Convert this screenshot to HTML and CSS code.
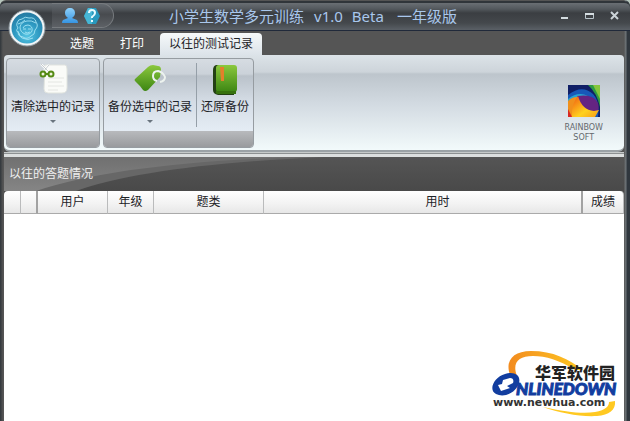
FILE: index.html
```html
<!DOCTYPE html>
<html lang="zh-CN">
<head>
<meta charset="utf-8">
<title>小学生数学多元训练</title>
<link rel="stylesheet" href="styles.css">
</head>
<body>
<div class="window">
  <header class="titlebar">
    <button class="orb" aria-label="菜单">
      <svg viewBox="0 0 38 38" width="38" height="38">
        <defs><radialGradient id="orb" cx=".5" cy=".75" r=".7"><stop offset="0" stop-color="#55c4e2"/><stop offset=".6" stop-color="#2d98c1"/><stop offset="1" stop-color="#257da5"/></radialGradient></defs>
        <circle cx="19" cy="19" r="18" fill="#f1f5f7" stroke="#8b969d"/>
        <circle cx="19" cy="19" r="15.500" fill="url(#orb)"/>
        <g fill="none" stroke="#a5e4f4" stroke-width=".9">
          <path d="M9 14q1-4 5-4 3-3 7-1 6-1 7 4 3 4-1 8 0 5-4 6-4 4-8 1-4 0-4-4-4-2-1-5-2-3-1-5z"/>
          <path d="M28 14q-5-3-9-2-6 1-7 6 0 5 5 7 5 1 7-3 1-5-4-6-4 0-5 3M15 20h3M20 20h3M17 23q2 2 5 0M10 22q-1 4 4 7 6 3 11 0M10 15q4-1 7-4"/>
        </g>
      </svg>
    </button>
    <div class="quick">
      <button aria-label="用户">
        <svg viewBox="0 0 18 16" width="18" height="16"><defs><linearGradient id="usr" x2="0" y2="1"><stop stop-color="#8ed0fa"/><stop offset="1" stop-color="#3694e2"/></linearGradient></defs><path d="M9 0c3 0 5 2 5 5s-2 4-3 5l5 2q1 1 1 3H1q0-2 1-3l5-2C6 9 4 8 4 5s2-5 5-5z" fill="url(#usr)"/></svg>
      </button>
      <button aria-label="帮助">
        <svg viewBox="0 0 18 16" width="18" height="16"><path d="M5 0h8l4 8-4 8H5L1 8z" fill="#2898bd"/><path d="M5 0h4v16H5L1 8z" fill="#46b6d5"/><path d="M6 5q0-3 3-3t3 3q0 2-3 4v1M9 12v2" fill="none" stroke="#e7fbff" stroke-width="2"/></svg>
      </button>
    </div>
    <h1 class="title"><span>小学生数学多元训练</span><span class="version">v1.0</span><span class="beta">Beta</span><span>一年级版</span></h1>
    <div class="controls">
      <button aria-label="最小化"><svg viewBox="0 0 11 11" width="11" height="11"><path d="M2 7h7" stroke="#d4dce0" stroke-width="2"/></svg></button>
      <button aria-label="最大化"><svg viewBox="0 0 11 11" width="11" height="11"><path d="M1.500 2.500h8v5h-8z" fill="none" stroke="#b9c4ca"/><path d="M1 3h9" stroke="#d4dce0" stroke-width="2"/></svg></button>
      <button aria-label="关闭"><svg viewBox="0 0 11 11" width="11" height="11"><path d="M2 1l7 7M9 1L2 8" stroke="#cbd3d8" stroke-width="2"/></svg></button>
    </div>
  </header>

  <nav class="tabs">
    <button>选题</button>
    <button>打印</button>
    <button class="active">以往的测试记录</button>
  </nav>

  <section class="ribbon">
    <div class="group">
      <div class="tools">
        <button class="tool">
          <svg viewBox="0 0 32 32" width="32" height="32"><path d="M8 1h20q2 0 2 4v19q0 5-5 5H11q-4 0-4-4z" fill="#fafbf8" stroke="#e1e4df"/><path d="M11 14h16M11 18h14M11 22h16M11 26h10" stroke="#e4e6e2"/><path d="M4 0l8 8M12 1L6 8" stroke="#fff" stroke-width="2"/><path d="M4 0l8 8M12 1L6 8" stroke="#aeb6b7" stroke-width=".7"/><g fill="#f1f4df" stroke="#558b15" stroke-width="2"><circle cx="6" cy="10" r="2.500"/><circle cx="14" cy="10" r="2.500"/></g><path d="M8 10h3" stroke="#558b15" stroke-width="2"/></svg>
          <span>清除选中的记录</span><i class="arrow"></i>
        </button>
      </div>
      <div class="group-foot"></div>
    </div>
    <div class="group">
      <div class="tools">
        <button class="tool">
          <svg viewBox="0 0 32 32" width="32" height="32"><defs><linearGradient id="tag" x2="0" y2="1"><stop stop-color="#8bc83d"/><stop offset="1" stop-color="#3d8613"/></linearGradient></defs><path d="M1 15L14 3q2-2 5-2l5 1q3 0 3 4l-1 7-12 13q-3 2-5 0l-3-4-5-5q-1-1 0-2z" fill="url(#tag)"/><path d="M23 17q-4-1-4-5 0-5 5-5 5 1 7 6 0 4-5 5" fill="none" stroke="#edf3ef" stroke-width="2"/></svg>
          <span>备份选中的记录</span><i class="arrow"></i>
        </button>
        <span class="divider"></span>
        <button class="tool">
          <svg viewBox="0 0 32 32" width="32" height="32"><path d="M8 1h-1Q4 2 4 6v20q0 4 5 5h16V1z" fill="#234014"/><rect x="7" y="1" width="21" height="27" rx="3" fill="url(#tag)"/><path d="M7 27h20v3H9q-3 0-2-3" fill="#36710e"/><path d="M11 3h4v14h-3z" fill="#e3802b"/></svg>
          <span>还原备份</span>
        </button>
      </div>
      <div class="group-foot"></div>
    </div>
    <div class="brand">
      <svg viewBox="0 0 32 32" width="32" height="32">
        <defs><clipPath id="square"><path d="M0 0h32v32H0z"/></clipPath><linearGradient id="flame" x2="1" y2="1"><stop offset=".1" stop-color="#f36b13"/><stop offset=".6" stop-color="#ffd21e"/><stop offset="1" stop-color="#f79a19"/></linearGradient></defs>
        <g clip-path="url(#square)"><path d="M0 0h32v32H0z" fill="#101f66"/><path d="M20 0h12v22Q29 8 20 0" fill="#2d9b43"/><path d="M25 0h7v14z" fill="#86c63c"/><path d="M0 10Q14-1 25 9q7 7 5 23h-3Q26 10 10 10 4 10 0 17z" fill="#1758b8"/><path d="M0 14Q10 6 20 11L8 17 0 22z" fill="#28a5d2"/><path d="M0 16q4-4 9-4l-4 20H0z" fill="#f0901c"/><path d="M9 11q14-2 19 4 4 5 2 11-14 3-21-15" fill="#642482"/><path d="M10 11q4 14 16 15l5-1-4 7H4Q3 19 10 11" fill="url(#flame)"/><path d="M0 24l4 8H0" fill="#d82923"/></g>
      </svg>
      <span>RAINBOW</span><span>SOFT</span>
    </div>
  </section>

  <main class="records">
    <div class="banner">
      <svg class="swoosh" viewBox="0 0 320 34" width="320" height="34"><defs><linearGradient id="shine" x2="0" y2="1"><stop stop-color="#707070"/><stop offset="1" stop-color="#858585"/></linearGradient></defs><path d="M0 0h320Q145 8 72 34H0z" fill="#676767"/><path d="M0 0h300Q120 5 32 34H0z" fill="url(#shine)"/></svg>
      <h2>以往的答题情况</h2>
    </div>
    <table>
      <colgroup><col class="mark"><col class="mark"><col class="user"><col class="grade"><col class="kind"><col><col class="score"></colgroup>
      <thead><tr><th></th><th class="thick"></th><th>用户</th><th>年级</th><th>题类</th><th class="thick time">用时</th><th>成绩</th></tr></thead>
    </table>
  </main>

  <a class="watermark" href="#" aria-label="华军软件园">
    <svg viewBox="0 0 128 68" width="128" height="68">
      <defs><linearGradient id="gold" x2="1"><stop stop-color="#f28b1f"/><stop offset="1" stop-color="#ffc922"/></linearGradient></defs>
      <path d="M20 27C13 12 21 1 40 1c22 0 38 8 52 19h-8C68 10 55 6 42 6 27 6 21 13 26 26z" fill="url(#gold)"/>
      <path d="M52 57c23 5 40 7 52 5 11-2 14-6 14-10l6-1c1 9-6 14-18 15-17 1-37-3-54-9z" fill="#ffc922"/>
      <text class="mark-cn" x="44" y="29">华军软件园</text>
      <path d="M14 24c10-3 16 2 14 9-3 10-15 15-23 11C-3 40 3 27 14 24zm5 4l-7 2-1 4-4 1 3 6 9-3-3-2 6-3c1-3 0-5-3-5z" fill="#123d9f" fill-rule="evenodd"/>
      <text class="mark-en" x="25" y="45">NLINEDOWN</text>
      <text class="mark-url" x="2" y="56">www.newhua.com</text>
    </svg>
  </a>
</div>
</body>
</html>
```
FILE: styles.css
```css
* { box-sizing: border-box; }
body {
  margin: 0;
  background: #b7c6bd;
  font: 12px/16px "Liberation Sans", "Noto Sans CJK SC", sans-serif;
  color: #1d2226;
}
button { padding: 0; border: 0; background: none; font: inherit; color: inherit; }
svg { display: block; }
h1, h2 { margin: 0; font-weight: 400; }

.window {
  position: relative;
  display: flex;
  flex-direction: column;
  min-height: 100vh;
  padding: 1px 6px 0 4px;
  border-radius: 6px 6px 0 0;
  background: linear-gradient(90deg, #30363b 0, #555 3px, #555 calc(100% - 6px), #70777b calc(100% - 4px), #30373e calc(100% - 3px));
}
.titlebar {
  display: flex;
  height: 30px;
  margin: 0 -6px 0 -4px;
  padding: 0 6px 0 52px;
  border-top: 2px solid #30353a;
  border-bottom: 1px solid #20293a;
  border-radius: 6px 6px 0 0;
  background: linear-gradient(#6a6f74, #53585d 6px, #3b3e42 10px, #44484c 20px, #5a6066);
}
.orb { position: absolute; left: 8px; top: 9px; z-index: 1; }
.quick {
  display: flex;
  align-items: center;
  gap: 4px;
  height: 25px;
  padding: 0 12px 0 9px;
  border: 1px solid #777b7f;
  border-left: 0;
  border-radius: 0 13px 13px 0;
  background: linear-gradient(#646a70, #484b4f 45%, #5d6166);
}
.title {
  display: flex;
  flex: 1;
  margin-left: 55px;
  font: 15px/26px "Noto Sans", "Noto Sans CJK SC", sans-serif;
  color: #a9c7ec;
}
.version { margin-left: 10px; }
.beta { margin: 0 13px 0 9px; }
.controls { display: flex; align-items: center; gap: 14px; margin-right: 4px; }

.tabs { display: flex; height: 24px; padding: 2px 0 0 56px; }
.tabs button { padding: 0 10px; margin-right: 6px; color: #fff; }
.tabs .active {
  padding: 0 9px;
  border-radius: 4px 4px 0 0;
  background: linear-gradient(#f6f9fa, #dce3e9);
  color: #1d2226;
}

.ribbon {
  display: flex;
  align-items: flex-start;
  gap: 3px;
  height: 97px;
  padding: 3px 2px;
  border-bottom: 2px solid #9ba2a6;
  border-radius: 4px 4px 6px 6px;
  background: linear-gradient(#dce3e8, #cdd4da 17px, #bdc5cc 19px, #d3dbe2 50px, #f2fafb);
}
.group {
  overflow: hidden;
  border: 1px solid #969ca1;
  border-radius: 4px;
  background: linear-gradient(#d6dce2, #cbd2d9 15px, #bac2ca 17px, #d4dce5 42px, #e5edf5 73px);
}
.tools { display: flex; height: 72px; }
.tool {
  display: flex;
  flex-direction: column;
  align-items: center;
  padding: 5px 4px 0;
}
.tool span { margin-top: 3px; }
.arrow {
  margin-top: 5px;
  border: 3px solid transparent;
  border-top-color: #69747e;
  border-bottom: 0;
}
.divider { width: 1px; margin: 4px 0; background: #959fa8; }
.group-foot { height: 16px; background: linear-gradient(#b8babd, #999b9e); }
.brand {
  display: flex;
  flex-direction: column;
  align-items: center;
  margin: 27px 19px 0 auto;
  font: 8px/10px "DejaVu Sans", sans-serif;
  color: #64696d;
}
.brand svg { margin-bottom: 6px; }

.records {
  flex: 1;
  border-top: 1px solid #c6caca;
  background: #fff;
}
.records::before {
  content: "";
  display: block;
  height: 3px;
  border-top: 1px solid #8d9192;
  background: #dcdfdf;
}
.banner {
  position: relative;
  height: 34px;
  padding: 9px 5px;
  background: linear-gradient(#555, #494949);
}
.swoosh { position: absolute; left: 0; top: 0; }
.banner h2 { position: relative; font-size: 12px; line-height: 16px; color: #efefef; }
table {
  width: 100%;
  table-layout: fixed;
  border-collapse: separate;
  border-spacing: 0;
  background: #494949;
}
th {
  height: 23px;
  padding: 0;
  border-right: 1px solid #babbbc;
  border-bottom: 1px solid #aaa;
  background: linear-gradient(#fff, #f2f2f2 60%, #e7e7e7);
  font-weight: 400;
}
th:first-child { border-top-left-radius: 4px; }
th:last-child { border-top-right-radius: 4px; }
.thick { border-right: 2px solid #a2a2a2; }
.time { padding-left: 30px; }
.mark { width: 17px; }
.user { width: 70px; }
.grade { width: 46px; }
.kind { width: 110px; }
.score { width: 41px; }

.watermark { position: absolute; right: 11px; bottom: 3px; }
.mark-cn { font: 900 16px "Noto Sans CJK SC", sans-serif; fill: #222; }
.mark-en { font: italic 900 17px Lato, sans-serif; fill: #123d9f; stroke: #123d9f; stroke-width: 1px; }
.mark-url { font: 700 11px "DejaVu Sans", sans-serif; fill: #333; }
```
